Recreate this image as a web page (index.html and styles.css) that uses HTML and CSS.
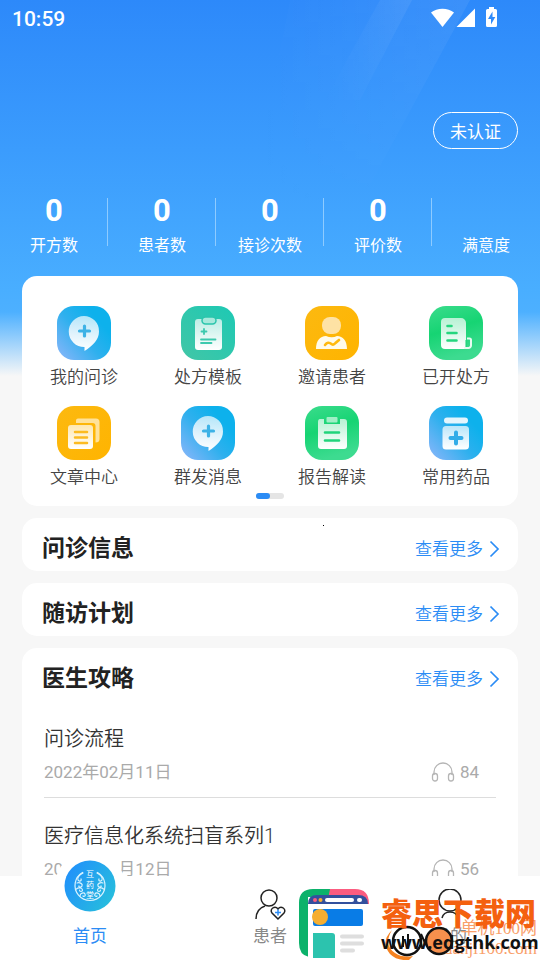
FILE: index.html
```
<!DOCTYPE html>
<html lang="zh-CN">
<head>
  <meta charset="UTF-8">
  <meta name="viewport" content="width=device-width, initial-scale=1.0">
  <title>互药堂</title>
  <link rel="stylesheet" href="styles.css">
</head>
<body>
  <div class="app">
    <!-- 背景光束 -->
    <svg class="rays" viewBox="0 0 540 260" preserveAspectRatio="none" aria-hidden="true">
      <defs>
        <linearGradient id="ray" x1="0" y1="0" x2="1" y2="0">
          <stop offset="0" stop-color="#fff" stop-opacity="0"/>
          <stop offset="1" stop-color="#fff" stop-opacity=".07"/>
        </linearGradient>
      </defs>
      <path d="M290 0H470L362 200H250Z" fill="url(#ray)"/>
      <path d="M380 0H412L360 100H325Z" fill="url(#ray)"/>
    </svg>

    <!-- 系统状态栏 -->
    <div class="status-bar">
      <span class="time">10:59</span>
      <svg class="status-icons" width="68" height="22" viewBox="0 0 68 22" fill="#fff" aria-hidden="true">
        <path d="M0 4.500C6-.6 17-.6 23 4.500L11.500 19Z"/>
        <path d="M44 .500V19H25.500Z"/>
        <path d="M58 -1h5v2h1.500a1.500 1.500 0 0 1 1.500 1.500v15a1.500 1.500 0 0 1-1.500 1.500h-8A1.500 1.500 0 0 1 55 17.500v-15A1.500 1.500 0 0 1 56.500 1H58Z"/>
        <path d="M61.500 3.500L57 11h3v5.500L64.300 9h-2.800Z" fill="#2f8bfb"/>
      </svg>
    </div>

    <main class="main">
      <div class="profile">
        <button class="verify" type="button">未认证</button>
      </div>

      <!-- 数据统计 -->
      <div class="stats">
        <div class="stat"><b>0</b><span>开方数</span></div>
        <div class="stat"><b>0</b><span>患者数</span></div>
        <div class="stat"><b>0</b><span>接诊次数</span></div>
        <div class="stat"><b>0</b><span>评价数</span></div>
        <div class="stat"><b></b><span>满意度</span></div>
      </div>

      <!-- 功能菜单 -->
      <div class="card menu">
        <svg class="defs" width="0" height="0" aria-hidden="true">
          <defs>
            <linearGradient id="blue" x1="0" y1="1" x2=".8" y2=".3">
              <stop offset="0" stop-color="#8db6fa"/><stop offset=".6" stop-color="#2fb0ee"/><stop offset="1" stop-color="#0db1ec"/>
            </linearGradient>
            <linearGradient id="teal" x1="0" y1="1" x2="1" y2="0">
              <stop offset="0" stop-color="#42c6a6"/><stop offset="1" stop-color="#1dc9b4"/>
            </linearGradient>
            <linearGradient id="yellow" x1="0" y1="0" x2="1" y2="1">
              <stop offset="0" stop-color="#fcb910"/><stop offset="1" stop-color="#ffb400"/>
            </linearGradient>
            <linearGradient id="green" x1="0" y1="0" x2=".3" y2="1">
              <stop offset="0" stop-color="#3bdc8c"/><stop offset=".5" stop-color="#16d473"/><stop offset="1" stop-color="#3ddb90"/>
            </linearGradient>
            <linearGradient id="shine" x1="0" y1="0" x2="0" y2="1">
              <stop offset="0" stop-color="#fff" stop-opacity=".68"/><stop offset="1" stop-color="#fff"/>
            </linearGradient>
            <symbol id="chat" viewBox="0 0 54 54">
              <path d="M27 10a15 15 0 0 1 15 15.500c0 8-6 14-14.500 19.500V41A15.500 15.500 0 0 1 27 10Z" fill="url(#shine)"/>
              <path d="M27.500 20v10M22.500 25h10" stroke="#3db2e6" stroke-width="3.200" stroke-linecap="round"/>
            </symbol>
          </defs>
        </svg>

        <a class="menu-item" href="#">
          <svg class="tile" viewBox="0 0 54 54"><rect width="54" height="54" rx="17" fill="url(#blue)"/><use href="#chat"/></svg>
          <span>我的问诊</span>
        </a>
        <a class="menu-item" href="#">
          <svg class="tile" viewBox="0 0 54 54">
            <rect width="54" height="54" rx="17" fill="url(#teal)"/>
            <rect x="14" y="13" width="27" height="31" rx="3" fill="url(#shine)"/>
            <rect x="21" y="11" width="14" height="7" rx="3.500" fill="#a7e9dc" stroke="#2ac5ac" stroke-width="1.500"/>
            <path d="M23 23v5M20.500 25.500h5M20 33.500h14.500M20 37h10.500" stroke="#3cc9ae" stroke-width="1.800" stroke-linecap="round"/>
          </svg>
          <span>处方模板</span>
        </a>
        <a class="menu-item" href="#">
          <svg class="tile" viewBox="0 0 54 54">
            <rect width="54" height="54" rx="17" fill="url(#yellow)"/>
            <rect x="17" y="11" width="19" height="17" rx="8" fill="#fee2a4"/>
            <path d="M11 43c0-8 4-13 10-13q6 2.500 11 0c6 0 10 5 10 13Z" fill="#fffbea"/>
            <path d="M20 39q3-4 6.500-1 2 1.500 4-1l3.500-3" fill="none" stroke="#ffb90e" stroke-width="2.600" stroke-linecap="round"/>
          </svg>
          <span>邀请患者</span>
        </a>
        <a class="menu-item" href="#">
          <svg class="tile" viewBox="0 0 54 54">
            <rect width="54" height="54" rx="17" fill="url(#green)"/>
            <path d="M16 12h16a5 5 0 0 1 5 5v26H16a4 4 0 0 1-4-4V16a4 4 0 0 1 4-4Z" fill="url(#shine)"/>
            <path d="M35 42h4.500a2.500 2.500 0 0 0 2.500-2.500V34a1.500 1.500 0 0 0-1.500-1.500H38" fill="none" stroke="#e8fbf1" stroke-width="2"/>
            <path d="M37.200 34v7" stroke="#25d67e" stroke-width="1.500"/>
            <path d="M18.500 20h4M18.500 27h9M18.500 34.500h9" stroke="#25d67e" stroke-width="2.600" stroke-linecap="round"/>
          </svg>
          <span>已开处方</span>
        </a>
        <a class="menu-item" href="#">
          <svg class="tile" viewBox="0 0 54 54">
            <rect width="54" height="54" rx="17" fill="url(#yellow)"/>
            <path d="M21 12.500h18a3.500 3.500 0 0 1 3.500 3.500v17q0 3.500-4 3.500V20q0-3-3-3H19v-2.500q0-2 2-2Z" fill="#ffe29a"/>
            <rect x="11" y="19" width="25" height="24" rx="3" fill="url(#shine)"/>
            <path d="M18 26h12M18 31.500h12M18 37h12" stroke="#fcbb20" stroke-width="2.500" stroke-linecap="round"/>
          </svg>
          <span>文章中心</span>
        </a>
        <a class="menu-item" href="#">
          <svg class="tile" viewBox="0 0 54 54"><rect width="54" height="54" rx="17" fill="url(#blue)"/><use href="#chat"/></svg>
          <span>群发消息</span>
        </a>
        <a class="menu-item" href="#">
          <svg class="tile" viewBox="0 0 54 54">
            <rect width="54" height="54" rx="17" fill="url(#green)"/>
            <path d="M15 13h4v5h16v-5h4a3 3 0 0 1 3 3v24a3 3 0 0 1-3 3H16a3 3 0 0 1-3-3V16q0-3 2-3Z" fill="url(#shine)"/>
            <rect x="21.500" y="11" width="11" height="5.500" rx="1" fill="#9fefc6"/>
            <path d="M20 26.500h14M20 34.500h14" stroke="#20d47b" stroke-width="2.600" stroke-linecap="round"/>
          </svg>
          <span>报告解读</span>
        </a>
        <a class="menu-item" href="#">
          <svg class="tile" viewBox="0 0 54 54">
            <rect width="54" height="54" rx="17" fill="url(#blue)"/>
            <rect x="15" y="11.500" width="24" height="6" rx="3" fill="#e3f5fd"/>
            <rect x="13.500" y="20" width="26.500" height="23.500" rx="3.500" fill="url(#shine)"/>
            <path d="M27 26.500v11M21.500 32h11" stroke="#32ace8" stroke-width="4" stroke-linecap="round"/>
          </svg>
          <span>常用药品</span>
        </a>
        <div class="pager"><i></i></div>
      </div>

      <section class="card">
        <div class="card-head">
          <h2>问诊信息</h2>
          <a href="#">查看更多<svg width="11" height="18" viewBox="0 0 11 18"><path d="M1.500 1.500L9 9 1.500 16.500"/></svg></a>
        </div>
        <i class="speck"></i>
      </section>

      <section class="card">
        <div class="card-head">
          <h2>随访计划</h2>
          <a href="#">查看更多<svg width="11" height="18" viewBox="0 0 11 18"><path d="M1.500 1.500L9 9 1.500 16.500"/></svg></a>
        </div>
      </section>

      <!-- 文章列表 -->
      <section class="card">
        <div class="card-head">
          <h2>医生攻略</h2>
          <a href="#">查看更多<svg width="11" height="18" viewBox="0 0 11 18"><path d="M1.500 1.500L9 9 1.500 16.500"/></svg></a>
        </div>
        <article class="post">
          <h3>问诊流程</h3>
          <div class="meta">
            <span>2022年02月11日</span>
            <span class="listens">
              <svg width="24" height="22" viewBox="0 0 24 22"><path d="M3 14V11a9 9 0 0 1 18 0v3"/><rect x="1.500" y="12.500" width="5" height="7.500" rx="2.500"/><rect x="17.500" y="12.500" width="5" height="7.500" rx="2.500"/></svg>
              84
            </span>
          </div>
        </article>
        <article class="post">
          <h3>医疗信息化系统扫盲系列1</h3>
          <div class="meta">
            <span>2022年01月12日</span>
            <span class="listens">
              <svg width="24" height="22" viewBox="0 0 24 22"><path d="M3 14V11a9 9 0 0 1 18 0v3"/><rect x="1.500" y="12.500" width="5" height="7.500" rx="2.500"/><rect x="17.500" y="12.500" width="5" height="7.500" rx="2.500"/></svg>
              56
            </span>
          </div>
        </article>
      </section>
    </main>

    <!-- 底部导航 -->
    <nav class="tabs">
      <a class="tab active" href="#">
        <span class="home-badge">
          <svg width="52" height="52" viewBox="0 0 52 52" aria-hidden="true">
            <defs>
              <linearGradient id="home" x1="0" y1=".2" x2="1" y2=".8">
                <stop offset="0" stop-color="#2190fb"/><stop offset="1" stop-color="#27bfdc"/>
              </linearGradient>
            </defs>
            <circle cx="26" cy="26" r="25.500" fill="url(#home)"/>
            <g fill="none" stroke="#d9f3ff" stroke-width="1.200" stroke-linecap="round">
              <path d="M18.500 12.500A15 15 0 1 0 33.500 12.500"/>
              <path d="M19 13c-4 2-6 5-5 7s4 1 3-1M13 23c3-1 6 1 5 3s-4 1-3 0M12.500 29c2-2 6-1 6 1s-3 2-3 0M16 36c0-3 4-4 5-2s-1 3-2 2"/>
              <path d="M33 13c4 2 6 5 5 7s-4 1-3-1M39 23c-3-1-6 1-5 3s4 1 3 0M39.500 29c-2-2-6-1-6 1s3 2 3 0M36 36c0-3-4-4-5-2s1 3 2 2"/>
            </g>
            <g class="seal"><text x="26" y="17">互</text><text x="26" y="28">药</text><text x="26" y="38">堂</text></g>
          </svg>
        </span>
        <span>首页</span>
      </a>
      <a class="tab" href="#">
        <svg class="tab-icon" width="32" height="32" viewBox="0 0 32 32">
          <circle cx="15" cy="9" r="8"/><path d="M2 30c0-6 3-11 9-13"/>
          <path d="M24 30l-6-6c-3-4 3-8 6-4 3-4 9 0 6 4Z"/>
          <path class="plus" d="M24 20.500v6M21 23.500h6"/>
        </svg>
        <span>患者</span>
      </a>
      <a class="tab" href="#">
        <svg class="tab-icon" width="32" height="32" viewBox="0 0 32 32">
          <circle cx="16" cy="11" r="11"/><path d="M8 29c2-8 14-8 16 0"/>
        </svg>
        <span>我的</span>
      </a>
    </nav>

    <!-- 下载站角标 -->
    <div class="watermark">
      <svg class="site-logo" width="70" height="70" viewBox="0 0 70 70" aria-hidden="true">
        <path d="M14 0H34V8H9V68H10Q0 66 0 54V14Q0 0 14 0Z" fill="#0cb26b"/>
        <path d="M31 0H56Q70 0 70 15H28Z" fill="#fb5c80"/>
        <path d="M9 15Q9 6 18 6H59Q69 6 69 15Z" fill="#33509d"/>
        <path d="M9 15H70V70H9Z" fill="#fff"/>
        <circle cx="16" cy="11" r="2" fill="#fb5c80"/><circle cx="21.500" cy="11" r="2" fill="#f5ae31"/>
        <rect x="26" y="9" width="29" height="4" rx="2" fill="#fff"/><rect x="58" y="9" width="5" height="4" rx="2" fill="#fff"/>
        <rect x="14" y="20" width="50" height="17" rx="2" fill="#097ce6"/>
        <circle cx="21" cy="28" r="8" fill="#f5ae31"/>
        <path d="M14 44H33Q36 44 36 47V69H14Z" fill="#2cc3ae"/>
        <path d="M43 47.500H63M43 54.500H63M43 61.500H54" stroke="#dedede" stroke-width="4" stroke-linecap="round"/>
      </svg>
      <div class="site-names">
        <div class="sub-site"><span>单机100网</span><span>danji100.com</span></div>
        <svg class="sub-logo" width="72" height="40" viewBox="0 0 72 40" aria-hidden="true">
          <path d="M9 9Q0 24 12 32 19 37 30 35L26 39Q14 40 7 33-3 21 9 9Z" fill="#f58220"/>
          <circle cx="24" cy="20" r="14" fill="#fff" stroke="#111" stroke-width="2.500"/>
          <circle cx="56" cy="20" r="13" fill="#f6904d" stroke="#111" stroke-width="2.500"/>
          <path d="M20 15v11M25 13v14M38 13l5 11" stroke="#111" stroke-width="2"/>
        </svg>
        <strong>睿思下载网</strong>
        <em>www.edgthk.com</em>
      </div>
    </div>
  </div>
</body>
</html>
```
FILE: styles.css
```
/* 基本重置 */
* { box-sizing: border-box; margin: 0; padding: 0; }

body {
  font-family: Roboto, "Noto Sans CJK SC", sans-serif;
  background: #f7f7f7;
  color: #333;
}

a {
  color: inherit;
  text-decoration: none;
}

.app {
  position: relative;
  display: flex;
  flex-direction: column;
  height: 100vh;
  overflow: hidden;
  background: linear-gradient(#2d89fa 0, #3b9cfd 150px, #49aeff 290px, #4db0ff 312px, #f7f7f7 376px);
}

.rays {
  position: absolute;
  top: 0;
  left: 0;
  width: 100%;
  height: 260px;
  -webkit-mask-image: linear-gradient(#000, transparent 220px);
  mask-image: linear-gradient(#000, transparent 220px);
}

/* 状态栏 */
.status-bar {
  position: relative;
  display: flex;
  align-items: center;
  justify-content: space-between;
  height: 38px;
  padding: 0 41px 0 12px;
  color: #fff;
}

.time {
  font-size: 21px;
  font-weight: 500;
  line-height: 24px;
}

.status-icons {
  overflow: visible;
}

.main {
  position: relative;
  flex: 1;
  min-height: 0;
  overflow: hidden;
  padding: 0 22px;
}

.profile {
  display: flex;
  justify-content: flex-end;
  padding: 74px 0 49px;
}

.verify {
  height: 37px;
  padding: 0 16px;
  border: 1px solid #fff;
  border-radius: 19px;
  background: transparent;
  color: #fff;
  font-family: inherit;
  font-size: 17px;
}

/* 统计 */
.stats {
  display: flex;
  margin: 0 -22px;
  padding-bottom: 18px;
  color: #fff;
}

.stat {
  flex: 1;
  display: flex;
  flex-direction: column;
  align-items: center;
  height: 60px;
  background: linear-gradient(#8ecbff, #8ecbff) right top / 1px 48px no-repeat;
}

.stat:last-child {
  background: none;
}

.stat b {
  height: 36px;
  font-size: 31px;
  line-height: 26px;
}

.stat span {
  font-size: 16px;
  line-height: 24px;
}

/* 卡片 */
.card {
  position: relative;
  margin-bottom: 12px;
  border-radius: 15px;
  background: #fff;
}

.menu {
  display: grid;
  grid-template-columns: repeat(4, 1fr);
  row-gap: 17px;
  padding-top: 30px;
}

.defs {
  position: absolute;
}

.menu-item {
  display: flex;
  flex-direction: column;
  align-items: center;
  gap: 5px;
  color: #444;
  font-size: 17px;
  font-weight: 350;
  line-height: 24px;
}

.tile {
  width: 54px;
  height: 54px;
}

.pager {
  grid-column: 1 / -1;
  justify-self: center;
  width: 28px;
  height: 6px;
  margin-top: -13px;
  border-radius: 3px;
  background: #e5e5e5;
}

.pager i {
  display: block;
  width: 14px;
  height: 6px;
  border-radius: 3px;
  background: #2b8cf5;
}

.card-head {
  display: flex;
  align-items: center;
  justify-content: space-between;
  height: 53px;
  padding: 8px 18px 0 20px;
}

.card-head h2 {
  color: #222;
  font-size: 23px;
  font-weight: 700;
  line-height: 32px;
}

.card-head a {
  display: flex;
  align-items: center;
  gap: 6px;
  color: #2b8cf5;
  font-size: 17px;
  font-weight: 350;
  line-height: 24px;
}

.card-head svg {
  fill: none;
  stroke: #2b8cf5;
  stroke-width: 1.700;
}

.speck {
  position: absolute;
  top: 7px;
  left: 301px;
  width: 1px;
  height: 1px;
  background: #000;
}

/* 文章 */
.post {
  margin: 0 22px;
  padding: 22px 0 13px;
  border-bottom: 1px solid #ddd;
}

.post h3 {
  color: #333;
  font-size: 20px;
  font-weight: 350;
  line-height: 32px;
}

.meta {
  display: flex;
  align-items: center;
  justify-content: space-between;
  margin-top: 5px;
  padding-right: 17px;
  color: #aaa;
  font-size: 17px;
  line-height: 24px;
}

.listens {
  display: flex;
  align-items: center;
  gap: 5px;
}

.listens svg {
  fill: none;
  stroke: #b5b5b5;
  stroke-width: 1.300;
}

/* 底部导航 */
.tabs {
  position: relative;
  display: flex;
  height: 84px;
  background: #fff;
}

.tab {
  position: relative;
  flex: 1;
  display: flex;
  flex-direction: column;
  align-items: center;
  justify-content: flex-end;
  gap: 3px;
  padding-bottom: 12px;
  color: #888;
  font-size: 17px;
  line-height: 24px;
}

.tab.active {
  color: #2b8cf5;
}

.tab-icon {
  fill: none;
  stroke: #222;
  stroke-width: 1.500;
}

.tab-icon .plus {
  stroke: #2b8cf5;
}

/* 首页圆形徽标，凸出导航栏 */
.home-badge {
  position: absolute;
  top: -25px;
  left: 50%;
  display: flex;
  align-items: center;
  justify-content: center;
  width: 70px;
  height: 70px;
  margin-left: -35px;
  border-radius: 50%;
  background: #fff;
}

.seal text {
  fill: #fff;
  font-family: "Noto Sans CJK SC", sans-serif;
  font-size: 8px;
  text-anchor: middle;
}

/* 角标 */
.watermark {
  position: absolute;
  right: 3px;
  bottom: 1px;
  display: flex;
  gap: 12px;
}

.site-names {
  position: relative;
  display: flex;
  flex-direction: column;
  width: 156px;
  padding-top: 5px;
}

.site-names strong {
  position: relative;
  color: #f4600f;
  font-family: "Noto Sans CJK SC", sans-serif;
  font-size: 31px;
  font-weight: 900;
  line-height: 36px;
  white-space: nowrap;
}

.site-names em {
  position: relative;
  color: #111;
  font-family: "Open Sans", sans-serif;
  font-size: 18px;
  font-style: normal;
  font-weight: 700;
  line-height: 24px;
}

.sub-site {
  position: absolute;
  top: 30px;
  right: 0;
  display: flex;
  flex-direction: column;
  align-items: flex-end;
  color: #f9a06b;
  font-family: "Liberation Serif", "Noto Sans CJK SC", serif;
  font-size: 17px;
  line-height: 20px;
}

.sub-logo {
  position: absolute;
  top: 32px;
  left: 2px;
}
```
